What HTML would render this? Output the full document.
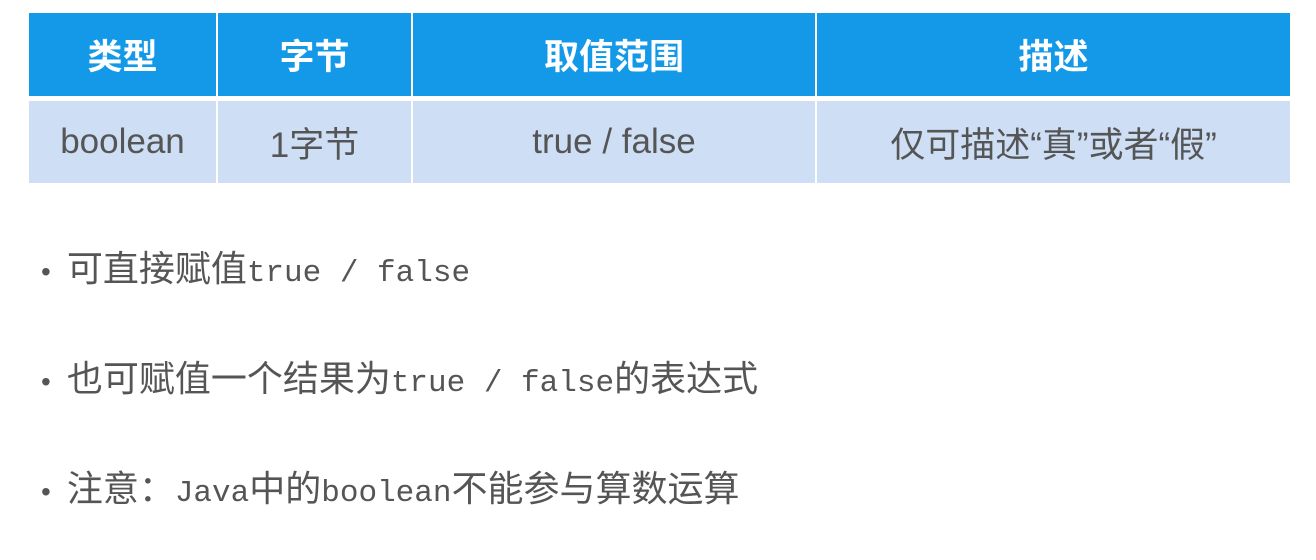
<!DOCTYPE html>
<html><head><meta charset="utf-8"><style>
body{margin:0;width:1316px;height:560px;background:#fff;overflow:hidden;font-family:"Liberation Sans","Noto Sans CJK SC",sans-serif}
.c{position:absolute;display:flex;align-items:center;justify-content:center}
.h{top:13px;height:83px;background:#1399e8;color:#fff;font-weight:bold;font-size:35px}
.b{top:101px;height:82px;background:#cddef5;color:#555;font-size:35px}
.l{position:absolute;left:41px;font-family:"Noto Sans CJK SC",sans-serif;font-size:36px;color:#555;white-space:pre;line-height:40px}
.l .m{font-family:"Liberation Mono",monospace;font-size:31px}
.l .d{font-family:"Liberation Sans",sans-serif;font-size:28px;margin-right:16px}
</style></head><body>
<div class="c h" style="left:29px;width:187px">类型</div>
<div class="c h" style="left:218px;width:193px">字节</div>
<div class="c h" style="left:413px;width:402px">取值范围</div>
<div class="c h" style="left:817px;width:473px">描述</div>
<div class="c b" style="left:29px;width:187px">boolean</div>
<div class="c b" style="left:218px;width:193px">1字节</div>
<div class="c b" style="left:413px;width:402px">true / false</div>
<div class="c b" style="left:817px;width:473px">仅可描述“真”或者“假”</div>
<div class="l" style="top:246px"><span class="d">•</span>可直接赋值<span class="m">true / false</span></div>
<div class="l" style="top:356px"><span class="d">•</span>也可赋值一个结果为<span class="m">true / false</span>的表达式</div>
<div class="l" style="top:466px"><span class="d">•</span>注意：<span class="m">Java</span>中的<span class="m">boolean</span>不能参与算数运算</div>
</body></html>
